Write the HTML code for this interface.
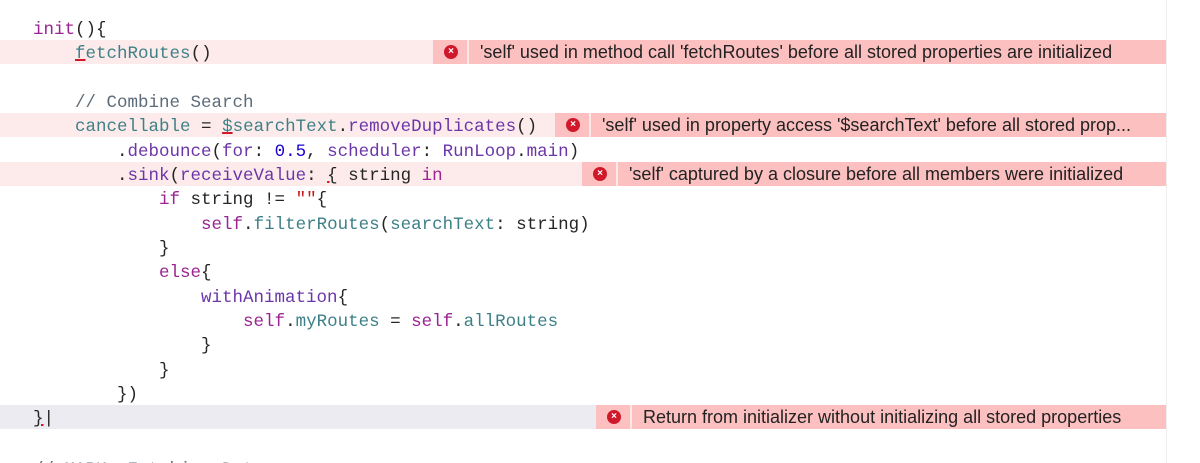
<html style="overflow:hidden"><head><style>
html,body{margin:0;width:1200px;height:463px;overflow:hidden;}
body{background:#fff;position:relative;font-family:"Liberation Mono",monospace;}
.l{position:absolute;left:33px;height:24.4px;line-height:24.4px;font-size:17.5px;white-space:pre;color:#262626;margin-top:2px;}
.hl{position:absolute;left:0;width:1166px;height:24.4px;background:#fdebeb;}
.er{position:absolute;height:24.4px;right:34px;background:#fdc0c0;font-family:"Liberation Sans",sans-serif;font-size:18px;line-height:25px;color:#222;overflow:hidden;}
.er .ic{position:absolute;left:0;top:0;width:34px;height:24.4px;border-right:2px solid #fde8e8;}
.er .ic i{position:absolute;left:11px;top:5px;width:14px;height:14px;border-radius:50%;background:#d0182a;color:#fff;font-style:normal;font-size:10px;line-height:14px;text-align:center;font-weight:bold;}
.er span{position:absolute;left:47px;white-space:nowrap;}
.k{color:#9b2393}.t{color:#3e8087}.m{color:#6c36a9}.n{color:#1c00cf}.c{color:#5d6c79}.s{color:#c41a16}
u{text-decoration-color:#d0182a;text-decoration-thickness:2px;}
</style></head><body>
<div class="hl" style="top:40px"></div>
<div class="hl" style="top:113px"></div>
<div class="hl" style="top:162px"></div>
<div class="hl" style="top:405px;background:#ecebf1"></div>
<div style="position:absolute;left:1166px;top:0;width:1px;height:463px;background:#eee"></div>
<div class="l" style="top:16px"><span class="k">init</span>(){</div>
<div class="l" style="top:40px">    <span class="t"><u>f</u>etchRoutes</span>()</div>
<div class="l" style="top:89px">    <span class="c">// Combine Search</span></div>
<div class="l" style="top:113px">    <span class="t">cancellable</span> = <span class="t"><u>$</u>searchText</span>.<span class="m">removeDuplicates</span>()</div>
<div class="l" style="top:138px">        .<span class="m">debounce</span>(<span class="m">for</span>: <span class="n">0.5</span>, <span class="m">scheduler</span>: <span class="m">RunLoop</span>.<span class="m">main</span>)</div>
<div class="l" style="top:162px">        .<span class="m">sink</span>(<span class="m">receiveValue</span>: <u>{</u> string <span class="k">in</span></div>
<div class="l" style="top:186px">            <span class="k">if</span> string != <span class="s">""</span>{</div>
<div class="l" style="top:211px">                <span class="k">self</span>.<span class="t">filterRoutes</span>(<span class="t">searchText</span>: string)</div>
<div class="l" style="top:235px">            }</div>
<div class="l" style="top:259px">            <span class="k">else</span>{</div>
<div class="l" style="top:284px">                <span class="m">withAnimation</span>{</div>
<div class="l" style="top:308px">                    <span class="k">self</span>.<span class="t">myRoutes</span> = <span class="k">self</span>.<span class="t">allRoutes</span></div>
<div class="l" style="top:332px">                }</div>
<div class="l" style="top:357px">            }</div>
<div class="l" style="top:381px">        })</div>
<div class="l" style="top:405px"><u>}</u>|</div>
<div class="l" style="top:456px"><span class="c">// MARK: Fetching Data</span></div>
<div class="er" style="top:40px;left:433px"><div class="ic"><i>×</i></div><span>'self' used in method call 'fetchRoutes' before all stored properties are initialized</span></div>
<div class="er" style="top:113px;left:555px"><div class="ic"><i>×</i></div><span>'self' used in property access '$searchText' before all stored prop...</span></div>
<div class="er" style="top:162px;left:582px"><div class="ic"><i>×</i></div><span>'self' captured by a closure before all members were initialized</span></div>
<div class="er" style="top:405px;left:596px"><div class="ic"><i>×</i></div><span>Return from initializer without initializing all stored properties</span></div>
</body></html>
